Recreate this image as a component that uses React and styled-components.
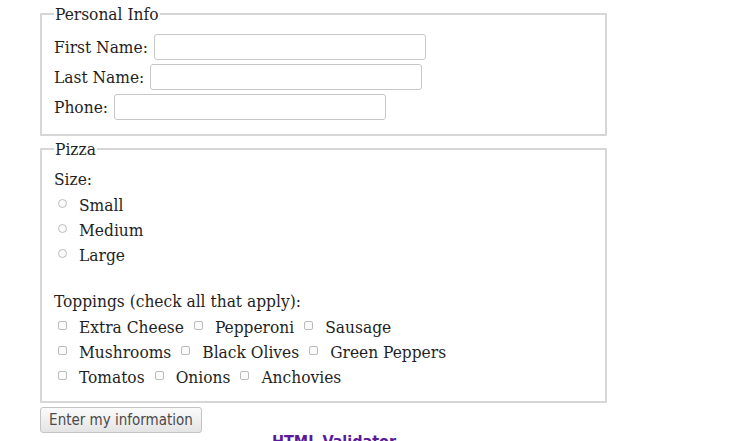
import styled, { createGlobalStyle } from 'styled-components';

const Global = createGlobalStyle`
  html, body { margin: 0; padding: 0; background: #fff; }
  body {
    font-family: "DejaVu Serif Condensed", "DejaVu Serif", serif;
    font-stretch: condensed;
    font-size: 17.2px;
    color: #1f1f1f;
  }
`;

const Page = styled.div`
  width: 567px;
  padding: 5px 0 0 40px;
`;

const Box = styled.fieldset`
  margin: 0 0 4px 0;
  padding: ${p => p.$pad};
  border: 2px solid #d6d6d6;
  border-radius: 1px;
  min-width: 0;
`;

const Legend = styled.legend`
  padding: 0 1px;
  margin-left: 0;
  line-height: 18px;
`;

const Row = styled.div`
  display: flex;
  align-items: center;
  height: 30px;
`;

const Label = styled.label`
  margin-right: 6px;
`;

const TextBox = styled.input`
  box-sizing: border-box;
  width: 272px;
  height: 26px;
  border: 1.5px solid #c8c8c8;
  border-radius: 3px;
  background: #fff;
  outline: none;
`;

const Heading = styled.div`
  line-height: 25px;
  margin: ${p => p.$m || '0'};
`;

const Options = styled.div`
  display: flex;
  align-items: center;
  height: 25px;
  padding-left: 4px;
`;

const Option = styled.label`
  display: flex;
  align-items: center;
  margin-right: 10px;
`;

const Mark = styled.span`
  display: inline-block;
  box-sizing: border-box;
  width: 9px;
  height: 9px;
  border: 1px solid #bcbcbc;
  border-radius: ${p => (p.$round ? '50%' : '2px')};
  background: #fbfbfb;
  margin: 0 12px 3px 0;
`;

const Button = styled.button`
  width: 162px;
  height: 26px;
  padding: 0;
  font-family: "DejaVu Sans Condensed", "DejaVu Sans", sans-serif;
  font-stretch: condensed;
  font-size: 15px;
  color: #4a4a4a;
  background: linear-gradient(#fbfbfb, #e4e4e4);
  border: 1px solid #c4c4c4;
  border-radius: 3px;
`;

const Footer = styled.p`
  margin: 0;
  padding-left: 232px;
  font-family: "DejaVu Sans", sans-serif;
  font-weight: bold;
  font-size: 16px;
  line-height: 18px;
  color: #5a1a9b;
  white-space: nowrap;
`;

const sizes = ['Small', 'Medium', 'Large'];
const toppings = [
  ['Extra Cheese', 'Pepperoni', 'Sausage'],
  ['Mushrooms', 'Black Olives', 'Green Peppers'],
  ['Tomatos', 'Onions', 'Anchovies'],
];

export default function App() {
  return (
    <>
      <Global />
      <Page>
        <Box $pad="9px 12px 12px">
          <Legend>Personal Info</Legend>
          <Row><Label>First Name:</Label><TextBox /></Row>
          <Row><Label>Last Name:</Label><TextBox /></Row>
          <Row><Label>Phone:</Label><TextBox /></Row>
        </Box>
        <Box $pad="9px 12px 12px">
          <Legend>Pizza</Legend>
          <Heading>Size:</Heading>
          {sizes.map(s => (
            <Options key={s}>
              <Option><Mark $round />{s}</Option>
            </Options>
          ))}
          <Heading $m="22px 0 0">Toppings (check all that apply):</Heading>
          {toppings.map((row, i) => (
            <Options key={i}>
              {row.map(t => (
                <Option key={t}><Mark />{t}</Option>
              ))}
            </Options>
          ))}
        </Box>
        <Button>Enter my information</Button>
        <Footer>HTML Validator</Footer>
      </Page>
    </>
  );
}
